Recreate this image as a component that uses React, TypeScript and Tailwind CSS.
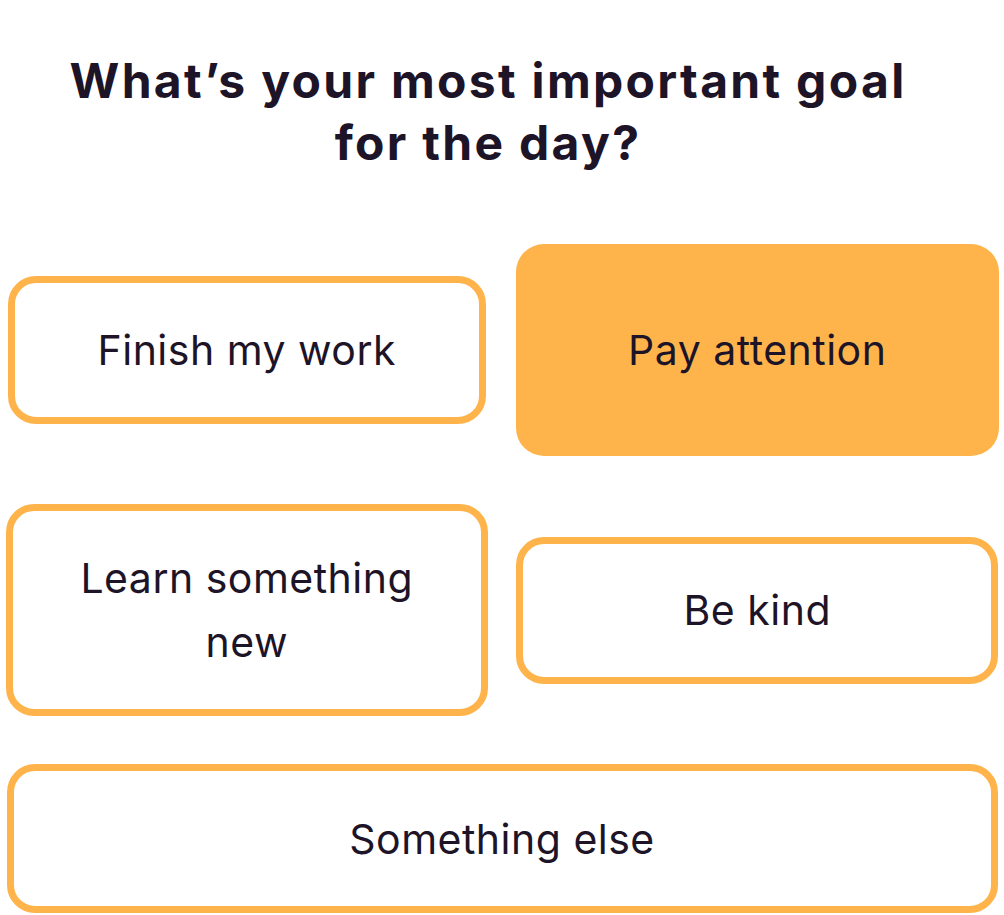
const options = [
  { label: 'Finish my work', box: 'w-[478px] h-[148px] border-[7px] border-[#ffb44b] bg-white' },
  { label: 'Pay attention', box: 'w-[483px] h-[212px] bg-[#ffb44b]' },
  { label: 'Learn something new', box: 'w-[482px] h-[212px] border-[7px] border-[#ffb44b] bg-white px-[60px]' },
  { label: 'Be kind', box: 'w-[482px] h-[147px] border-[7px] border-[#ffb44b] bg-white' },
];

export default function App() {
  return (
    <div className="w-[1004px] h-[915px] bg-white overflow-hidden text-[#1d1428] font-['Inter',sans-serif]">
      <h1 className="pt-[50px] pr-[28px] text-center text-[48px] leading-[62px] font-bold tracking-[0.048em]">
        What’s your most important goal
        <br />
        for the day?
      </h1>

      <div className="mt-[70px] px-[5px] grid grid-cols-2 gap-x-[27px] gap-y-[48px] items-center">
        {options.map((o) => (
          <button
            key={o.label}
            className={`justify-self-center flex items-center justify-center rounded-[28px] text-[41px] leading-[64px] tracking-[0.012em] text-center ${o.box}`}
          >
            {o.label}
          </button>
        ))}
        <button className="col-span-2 justify-self-center w-[991px] h-[149px] flex items-center justify-center rounded-[28px] border-[7px] border-[#ffb44b] bg-white text-[41px] leading-[64px] tracking-[0.012em]">
          Something else
        </button>
      </div>
    </div>
  );
}
